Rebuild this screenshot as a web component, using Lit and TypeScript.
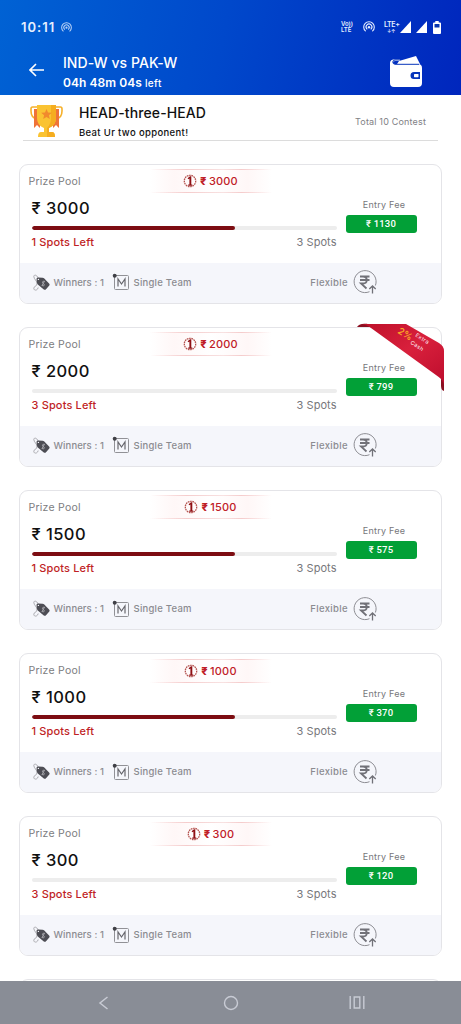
import { LitElement, html, css, svg, nothing } from "lit";
import { customElement, property } from "lit/decorators.js";

interface Contest {
  prize: number;
  fee: number;
  left: number;
  total: number;
  bonus?: string;
}

const contests: Contest[] = [
  { prize: 3000, fee: 1130, left: 1, total: 3 },
  { prize: 2000, fee: 799, left: 3, total: 3, bonus: "2%" },
  { prize: 1500, fee: 575, left: 1, total: 3 },
  { prize: 1000, fee: 370, left: 1, total: 3 },
  { prize: 300, fee: 120, left: 3, total: 3 },
];

const hotspot = svg`
  <g fill="none" stroke="currentColor" stroke-width="1.1" stroke-linecap="round">
    <path d="M2.4 9.9a5.300 5.300 0 1 1 7.2 0"/>
    <path d="M3.9 8a2.9 2.9 0 1 1 4.2 0"/>
  </g>
  <circle cx="6" cy="6.200" r="1.2" fill="currentColor"/>`;

@customElement("status-bar")
export class StatusBar extends LitElement {
  static styles = css`
    :host { display: flex; align-items: center; height: 54px; padding: 0 20px 0 21px; box-sizing: border-box; color: #e6efff; }
    .time { font: 600 13px/16px Inter, sans-serif; letter-spacing: 1px; width: 40px; }
    svg { display: block; flex: none; }
    .small { opacity: .8; }
    .grow { flex: 1; }
    .volte { font: 600 6px/6px Inter, sans-serif; width: 22px; }
    .lte { font: 600 7px/7px Inter, sans-serif; width: 16px; letter-spacing: -.3px; }
    .arrows { display: block; font-size: 5px; line-height: 6px; padding-left: 3px; }
    .h { margin-right: 9px; }
    .s { margin-right: 5px; }
    .last { margin-right: 6px; }
  `;
  render() {
    return html`
      <span class="time">10:11</span>
      <svg class="small" width="11" height="11" viewBox="0 0 12 12">${hotspot}</svg>
      <span class="grow"></span>
      <span class="volte">Vo))<br />LTE</span>
      <svg class="h" width="12" height="12" viewBox="0 0 12 12">${hotspot}</svg>
      <span class="lte">LTE+<span class="arrows">↓↑</span></span>
      <svg class="s" width="11" height="12" viewBox="0 0 11 12"><path d="M11 0v12H0z" fill="#fff" /></svg>
      <svg class="last" width="11" height="12" viewBox="0 0 11 12"><path d="M11 0v12H0z" fill="#fff" /></svg>
      <svg width="8" height="13" viewBox="0 0 8 13">
        <path d="M2.3 0h3.4v1.4H7a1 1 0 0 1 1 1V12a1 1 0 0 1-1 1H1a1 1 0 0 1-1-1V2.400a1 1 0 0 1 1-1h1.300z" fill="#fff" />
        <path d="M1.500 3h5v3.500h-5z" fill="#0634b0" />
      </svg>`;
  }
}

@customElement("contest-card")
export class ContestCard extends LitElement {
  @property({ attribute: false }) contest!: Contest;

  static styles = css`
    :host { display: block; position: relative; height: 140.2px; flex: none; }
    .card {
      height: 100%; box-sizing: border-box; display: flex; flex-direction: column;
      border: 1.5px solid #e4e4e8; border-radius: 9px; overflow: hidden; background: #fff;
    }
    .top { display: flex; align-items: center; height: 33px; padding-left: 9px; flex: none; }
    .label { width: 121px; font-size: 10.500px; color: #7c7c80; letter-spacing: .25px; }
    .tag {
      position: relative; width: 122px; height: 24px; display: flex; align-items: center; justify-content: center; gap: 3px;
      color: #bf2027; font-weight: 500; font-size: 11px; letter-spacing: .2px;
      background: linear-gradient(90deg, #fff 0%, #fff7f7 20%, #fff 50%, #fff7f7 80%, #fff 100%);
    }
    .tag::before, .tag::after {
      content: ""; position: absolute; left: 0; right: 0; height: 1px;
      background: linear-gradient(90deg, transparent, #f5cccc 30%, #f8e2e2 60%, #f5cccc 75%, transparent);
    }
    .tag::before { top: 0; }
    .tag::after { bottom: 0; }
    .tag svg { display: block; }
    .tag b { font-weight: 800; margin-right: -1px; }
    .body { display: flex; flex: 1; padding-left: 12px; }
    .pool { width: 305px; }
    .amount { font-size: 16.500px; line-height: 20px; font-weight: 500; color: #111; letter-spacing: .45px; }
    .bar { height: 4px; margin-top: 8px; border-radius: 2px; background: #ededed; overflow: hidden; }
    .fill { height: 100%; border-radius: 2px; background: #7d0d12; }
    .spots { display: flex; justify-content: space-between; margin-top: 5px; font-size: 11px; line-height: 15px; }
    .left { color: #c01f26; font-weight: 500; letter-spacing: .15px; }
    .total { color: #77777b; letter-spacing: .05px; }
    .entry { width: 71px; margin-left: 9px; text-align: center; padding-top: 1px; }
    .feelabel { font-size: 9px; line-height: 12px; color: #77777b; letter-spacing: .25px; padding-left: 6px; }
    .fee { height: 18px; margin-top: 4px; border-radius: 3px; background: #02a037; color: #fff; font: 500 9.500px/18px Roboto, sans-serif; letter-spacing: .2px; }
    .foot {
      height: 40px; flex: none; display: flex; align-items: center; background: #f5f6fb; color: #8b8b90;
      font-size: 9.500px; padding: 0 0 1px 13px; box-sizing: border-box; font-weight: 500;
    }
    .foot svg { display: block; flex: none; }
    .winners { width: 58px; margin-left: 4px; white-space: nowrap; letter-spacing: .08px; }
    .team { margin-left: 4px; flex: 1; letter-spacing: .24px; }
    .flex { margin-right: 5px; letter-spacing: .35px; }
    .rupee { margin-right: 64px; }
    .ribbon { position: absolute; left: 338px; top: -4px; }
  `;

  render() {
    const c = this.contest;
    return html`
      <div class="card">
        <div class="top">
          <span class="label">Prize Pool</span>
          <div class="tag">
            <svg width="14" height="14" viewBox="0 0 14 14">
              <circle cx="7" cy="7" r="5.700" fill="none" stroke="#b5534f" stroke-width="1.300" stroke-dasharray="1.600 .7" />
              <path d="M4.600 4.200 7 2.200h1.300v8.300h1v1.300H5.200v-1.300h1.200V4.500L5.300 5.300z" fill="#8f1014" />
            </svg>
            <span><b>₹</b> ${c.prize}</span>
          </div>
        </div>
        <div class="body">
          <div class="pool">
            <div class="amount">₹ ${c.prize}</div>
            <div class="bar"><div class="fill" style="width:${((c.total - c.left) / c.total) * 100}%"></div></div>
            <div class="spots"><span class="left">${c.left} Spots Left</span><span class="total">${c.total} Spots</span></div>
          </div>
          <div class="entry">
            <div class="feelabel">Entry Fee</div>
            <div class="fee">₹ ${c.fee}</div>
          </div>
        </div>
        <div class="foot">
          <svg width="17" height="17" viewBox="0 0 17 17">
            <path d="M5.500 5C4.500 1 1 0 .8 2.500.7 5 4.500 7 4 10S.6 12 .8 14.500s4 2 4.400-1" fill="none" stroke="#9b9ba0" stroke-width=".8" />
            <path d="M3.500 5q0-1.500 1.500-1.500l4.600.2q1 0 1.700.7l5 5.400q.7.900 0 1.800l-3.500 3.800q-1 .9-2 0l-6-5q-.8-.8-.9-1.800z" fill="#4d4d54" />
            <circle cx="5.400" cy="5.400" r=".7" fill="#f5f6fb" />
            <path d="M11.300 7.600c-1.200-1-2.400.4-1.500 1.500s1.800 1 1.500 2-1.600 1-2.300.1M11.700 6.800l-2.900 5.100" fill="none" stroke="#b9b9be" stroke-width=".8" />
          </svg>
          <span class="winners">Winners : 1</span>
          <svg width="18" height="18" viewBox="0 0 18 18">
            <rect x="2.500" y="2.500" width="14" height="14" rx="1" fill="none" stroke="#919196" />
            <circle cx="2.700" cy="2.700" r="2" fill="#404046" />
            <path d="M6 13.500V6l3.500 5L13 6v7.500" fill="none" stroke="#68686e" stroke-width="1.200" />
          </svg>
          <span class="team">Single Team</span>
          <span class="flex">Flexible</span>
          <svg class="rupee" width="24" height="24" viewBox="0 0 24 24">
            <path d="M16.500 21.700A11 11 0 1 1 22.400 15.500" fill="none" stroke="#8d8d93" stroke-width="1" />
            <path d="M7 6.500H16.500M7 10H16.500M7.500 6.500h2.500c5 0 5 7 0 7H8l5.500 5" fill="none" stroke="#717178" stroke-width="1.800" />
            <path d="M19.500 23.500V16M16.300 19l3.200-3 3.200 3" fill="none" stroke="#717178" stroke-width="1.300" />
          </svg>
        </div>
      </div>
      ${c.bonus
        ? html`<svg class="ribbon" width="88" height="70" viewBox="0 0 88 70">
            <defs>
              <linearGradient id="r" x1="0" y1="0" x2="1" y2="1">
                <stop offset="0" stop-color="#bd1029" /><stop offset=".5" stop-color="#d9203c" /><stop offset="1" stop-color="#bd0d2d" />
              </linearGradient>
            </defs>
            <path d="M0 4C2 .8 5 .5 10 .8L14 4z" fill="#8a0f20" />
            <path d="M87 68c-3-1-3-4-3-7v-6l3 1z" fill="#8a0f20" />
            <path d="M3 1H49L82 20q5 3 5 8V62q-1-5-6-8.500L14 5Q9 1 3 1z" fill="url(#r)" />
            <g transform="translate(41 8) rotate(32)" font-family="Inter, sans-serif">
              <text x="0" y="2" font-size="9.500" font-weight="600" fill="#f9a825">${c.bonus}</text>
            </g>
            <g transform="translate(58 13) rotate(33)" font-family="Inter, sans-serif" font-size="5.400" font-weight="500" fill="#f9dfe2">
              <text x="0" y="0" letter-spacing=".4">Extra</text>
              <text x="0" y="9" letter-spacing=".3">Cash</text>
            </g>
          </svg>`
        : nothing}`;
  }
}

@customElement("app-root")
export class AppRoot extends LitElement {
  static styles = css`
    :host { display: flex; flex-direction: column; width: 461px; height: 1024px; overflow: hidden; background: #fff; font-family: Inter, "Noto Sans", sans-serif; }
    header { height: 95px; flex: none; background: linear-gradient(102deg, #0062d4, #0048cb 48%, #0026bd); color: #fff; }
    .nav { display: flex; height: 41px; padding: 0 38px 0 29px; }
    .nav svg { display: block; flex: none; }
    .back { margin-top: 9px; }
    .heading { margin-left: 19px; flex: 1; }
    .match { font-size: 14px; line-height: 18px; font-weight: 500; letter-spacing: .05px; }
    .clock { font-size: 12px; line-height: 16px; font-weight: 600; margin-top: 3px; letter-spacing: .05px; }
    .clock small { font-size: 10px; font-weight: 500; letter-spacing: .4px; }
    .title { display: flex; flex: none; height: 45px; margin: 0 23px; border-bottom: 1px solid #dcdcdc; box-sizing: content-box; }
    .trophy { margin: 9px 0 0 6px; display: block; flex: none; }
    .names { margin-left: 15px; flex: 1; color: #111; }
    .name { font-size: 14px; line-height: 18px; margin-top: 9px; font-weight: 500; letter-spacing: .1px; }
    .sub { font-size: 9.500px; line-height: 13px; margin-top: 4px; font-weight: 500; letter-spacing: .35px; }
    .count { font-size: 9px; margin: 21px 12px 0 0; line-height: 12px; color: #818185; letter-spacing: .17px; }
    main { flex: 1; min-height: 0; overflow: hidden; display: flex; flex-direction: column; gap: 23px; padding: 22.500px 19px 0 18.500px; }
    .next { height: 30px; flex: none; border: 1.500px solid #e4e4e8; border-radius: 9px; }
    footer { height: 43px; flex: none; background: #898d96; display: flex; align-items: center; justify-content: space-between; padding: 0 96px 0 98px; }
    footer svg { display: block; }
    .home { margin-left: 3px; }
  `;

  render() {
    return html`
      <header>
        <status-bar></status-bar>
        <div class="nav">
          <svg class="back" width="15" height="14" viewBox="0 0 15 14">
            <path d="M15 7H1M7 1 1 7l6 6" fill="none" stroke="#fff" stroke-width="1.600" />
          </svg>
          <div class="heading">
            <div class="match">IND-W vs PAK-W</div>
            <div class="clock">04h 48m 04s <small>left</small></div>
          </div>
          <svg width="34" height="34" viewBox="0 0 34 34">
            <path d="M10 7 27 2l4 8H8z" fill="#fff" />
            <path d="M11 5.500H5A3.500 3.500 0 0 0 1 9v20a4 4 0 0 0 4 4h24a4 4 0 0 0 4-4V14a4 4 0 0 0-4-4H6q-2 0-2-1.500T6 7h5z" fill="#fff" />
            <path d="M11 6H6q-2.200 0-2.200 2T6 10.300h24" fill="none" stroke="#0735bb" stroke-width="1" />
            <path d="M31 18h-6a3.500 3.500 0 0 0 0 7h6z" fill="#0735bb" />
            <rect x="25" y="20" width="4.500" height="3.200" rx=".6" fill="#fff" />
          </svg>
        </div>
      </header>
      <div class="title">
        <svg class="trophy" width="35" height="34" viewBox="0 0 35 34">
          <path d="M9 3H3.500q-1.500 0-1.500 2v2q0 7 6 8M26 3h5.500q1.500 0 1.500 2v2q0 7-6 8" fill="none" stroke="#f6b12b" stroke-width="1.600" />
          <path d="M5 5h6v19l-3-3-3 3zM24 5h6v19l-3-3-3 3z" fill="#ef7338" />
          <path d="M8 1h19v12c0 7-3 9-7 11v4h3q3 0 3 5H9q0-5 3-5h3v-4c-4-2-7-4-7-11z" fill="#fac332" />
          <path d="M22 1h5v12c0 7-3 9-7 11v4h3q3 0 3 5h-8V24c3-3 4-6 4-11z" fill="#f5ad20" />
          <path d="m17.500 5 1.500 3.500 3.800.3-2.900 2.500.9 3.700-3.300-2-3.300 2 .9-3.700-2.900-2.500 3.800-.3z" fill="#f18a2d" />
        </svg>
        <div class="names">
          <div class="name">HEAD-three-HEAD</div>
          <div class="sub">Beat Ur two opponent!</div>
        </div>
        <span class="count">Total 10 Contest</span>
      </div>
      <main>
        ${contests.map((c) => html`<contest-card .contest=${c}></contest-card>`)}
        <div class="next"></div>
      </main>
      <footer>
        <svg width="11" height="14" viewBox="0 0 11 14"><path d="M9.500 1 2 7l7.500 6" fill="none" stroke="#c8cbd4" stroke-width="1.500" /></svg>
        <svg class="home" width="16" height="16" viewBox="0 0 16 16"><circle cx="8" cy="8" r="6.500" fill="none" stroke="#c8cbd4" stroke-width="1.400" /></svg>
        <svg width="16" height="13" viewBox="0 0 16 13"><path d="M1.200 0v13M14.800 0v13M5.200 1h5.600v11H5.200z" fill="none" stroke="#c8cbd4" stroke-width="1.400" /></svg>
      </footer>`;
  }
}
